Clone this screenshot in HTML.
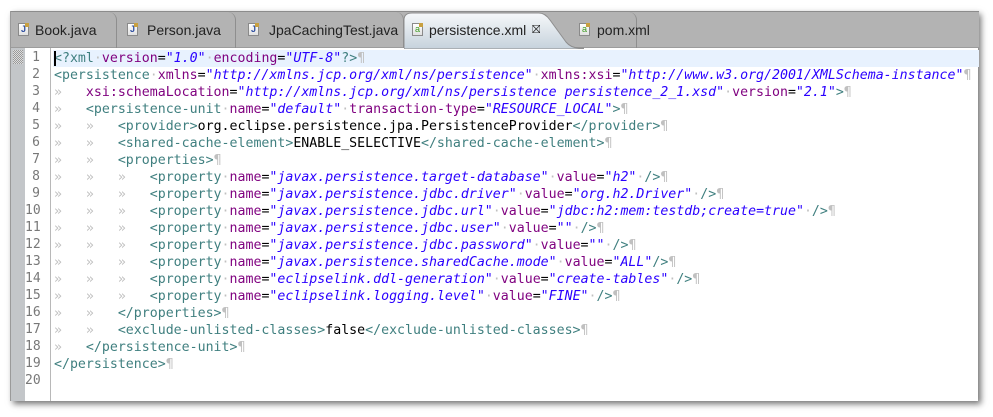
<!DOCTYPE html>
<html><head><meta charset="utf-8"><style>
*{margin:0;padding:0;box-sizing:border-box}
body{width:993px;height:417px;background:#fff;position:relative;overflow:hidden}
.win{position:absolute;left:10px;top:11px;width:968px;height:390px;background:#fff;box-shadow:3px 3px 6px rgba(0,0,0,.55);border-left:1px solid #9a9a9a}
.tabs{position:absolute;left:0;top:0;width:968px;height:37px;background:#b3b3b3;border-bottom:1px solid #9c9c9c;border-top:1px solid #8c8c8c}
.tab{position:absolute;top:0;height:36px;font:14px "Liberation Sans",sans-serif;color:#222;line-height:36px;border-right:1px solid #8e8e8e;border-radius:0 8px 0 0}
.ic{position:absolute;top:11px;width:11px;height:13px;border:1px solid #8a8a8a;background:linear-gradient(#fff,#e0e0e0);font:bold 9px "Liberation Sans",sans-serif;line-height:11px;text-align:center;color:#3050a0}
.ic.x{color:#3a9a20;font-weight:normal}
.ic::after{content:"";position:absolute;right:-1px;top:-1px;width:4px;height:4px;background:#c8a040}
.ed{position:absolute;left:0;top:37px;width:968px;height:353px}
.g1{position:absolute;left:0;top:0;width:14px;height:353px;background:#c3c6c9}
.g1 .d{position:absolute;left:2px;top:2px;width:10px;height:14px;background:repeating-conic-gradient(#999 0 25%,#ddd 0 50%) 0 0/2px 2px}
.ln{position:absolute;left:14px;top:0;width:26px;height:353px;border-right:1px solid #b8b8b8;background:#fff}
.ln div{height:17px;line-height:17px;text-align:right;padding-right:10px;font:13px "DejaVu Sans Mono",monospace;color:#787878}
.hl{position:absolute;left:42px;top:2px;width:926px;height:17px;background:#e8f2fe}
pre{position:absolute;left:43px;top:2px;font:13.25px/17px "DejaVu Sans Mono","Liberation Mono",monospace;color:#000;tab-size:4;white-space:pre}
.t{color:#3f7f7f}.a{color:#7f007f}.v{color:#2a00ff;font-style:italic}.w{color:#c0c0c0}
.cur{position:absolute;left:43px;top:3px;width:2px;height:15px;background:#000}
</style></head><body>
<div class="win">
<div class="tabs">
 <div class="tab" style="left:0;width:106px"><span class="ic" style="left:7px">J</span><span style="position:absolute;left:24px">Book.java</span></div>
 <div class="tab" style="left:106px;width:119px"><span class="ic" style="left:10px">J</span><span style="position:absolute;left:30px">Person.java</span></div>
 <div class="tab" style="left:225px;width:168px"><span class="ic" style="left:12px">J</span><span style="position:absolute;left:33px">JpaCachingTest.java</span></div>
 <svg style="position:absolute;left:393px;top:0" width="180" height="37"><path d="M0 37 V8 Q0 1 8 1 H135 Q141 1 146 8 L162 30 Q167 36 175 36 H180 V37 Z" fill="url(#g)" stroke="#8e8e8e"/><defs><linearGradient id="g" x1="0" y1="0" x2="0" y2="1"><stop offset="0" stop-color="#f6f8fa"/><stop offset="1" stop-color="#c6d2dc"/></linearGradient></defs></svg>
 <div class="tab" style="left:393px;width:150px;border:none"><span class="ic x" style="left:8px">a</span><span style="position:absolute;left:25px">persistence.xml</span><span style="position:absolute;left:128px;font-size:11px">⛝</span></div>
 <div class="tab" style="left:543px;width:83px"><span class="ic x" style="left:25px">a</span><span style="position:absolute;left:43px">pom.xml</span></div>
</div>
<div class="ed">
<div class="g1"><div class="d"></div></div>
<div class="hl"></div>
<div class="ln"><div style="height:2px"></div><div>1</div><div>2</div><div>3</div><div>4</div><div>5</div><div>6</div><div>7</div><div>8</div><div>9</div><div>10</div><div>11</div><div>12</div><div>13</div><div>14</div><div>15</div><div>16</div><div>17</div><div>18</div><div>19</div><div>20</div></div>
<pre><span class="t">&lt;?xml</span><span class="w">·</span><span class="a">version</span>=<span class="v">"1.0"</span><span class="w">·</span><span class="a">encoding</span>=<span class="v">"UTF-8"</span><span class="t">?&gt;</span><span class="w">¶</span>
<span class="t">&lt;persistence</span><span class="w">·</span><span class="a">xmlns</span>=<span class="v">"http://xmlns.jcp.org/xml/ns/persistence"</span><span class="w">·</span><span class="a">xmlns:xsi</span>=<span class="v">"http://www.w3.org/2001/XMLSchema-instance"</span><span class="w">¶</span>
<span class="w">»   </span><span class="a">xsi:schemaLocation</span>=<span class="v">"http://xmlns.jcp.org/xml/ns/persistence persistence_2_1.xsd"</span><span class="w">·</span><span class="a">version</span>=<span class="v">"2.1"</span><span class="t">&gt;</span><span class="w">¶</span>
<span class="w">»   </span><span class="t">&lt;persistence-unit</span><span class="w">·</span><span class="a">name</span>=<span class="v">"default"</span><span class="w">·</span><span class="a">transaction-type</span>=<span class="v">"RESOURCE_LOCAL"</span><span class="t">&gt;</span><span class="w">¶</span>
<span class="w">»   »   </span><span class="t">&lt;provider&gt;</span>org.eclipse.persistence.jpa.PersistenceProvider<span class="t">&lt;/provider&gt;</span><span class="w">¶</span>
<span class="w">»   »   </span><span class="t">&lt;shared-cache-element&gt;</span>ENABLE_SELECTIVE<span class="t">&lt;/shared-cache-element&gt;</span><span class="w">¶</span>
<span class="w">»   »   </span><span class="t">&lt;properties&gt;</span><span class="w">¶</span>
<span class="w">»   »   »   </span><span class="t">&lt;property</span><span class="w">·</span><span class="a">name</span>=<span class="v">"javax.persistence.target-database"</span><span class="w">·</span><span class="a">value</span>=<span class="v">"h2"</span><span class="w">·</span><span class="t">/&gt;</span><span class="w">¶</span>
<span class="w">»   »   »   </span><span class="t">&lt;property</span><span class="w">·</span><span class="a">name</span>=<span class="v">"javax.persistence.jdbc.driver"</span><span class="w">·</span><span class="a">value</span>=<span class="v">"org.h2.Driver"</span><span class="w">·</span><span class="t">/&gt;</span><span class="w">¶</span>
<span class="w">»   »   »   </span><span class="t">&lt;property</span><span class="w">·</span><span class="a">name</span>=<span class="v">"javax.persistence.jdbc.url"</span><span class="w">·</span><span class="a">value</span>=<span class="v">"jdbc:h2:mem:testdb;create=true"</span><span class="w">·</span><span class="t">/&gt;</span><span class="w">¶</span>
<span class="w">»   »   »   </span><span class="t">&lt;property</span><span class="w">·</span><span class="a">name</span>=<span class="v">"javax.persistence.jdbc.user"</span><span class="w">·</span><span class="a">value</span>=<span class="v">""</span><span class="w">·</span><span class="t">/&gt;</span><span class="w">¶</span>
<span class="w">»   »   »   </span><span class="t">&lt;property</span><span class="w">·</span><span class="a">name</span>=<span class="v">"javax.persistence.jdbc.password"</span><span class="w">·</span><span class="a">value</span>=<span class="v">""</span><span class="w">·</span><span class="t">/&gt;</span><span class="w">¶</span>
<span class="w">»   »   »   </span><span class="t">&lt;property</span><span class="w">·</span><span class="a">name</span>=<span class="v">"javax.persistence.sharedCache.mode"</span><span class="w">·</span><span class="a">value</span>=<span class="v">"ALL"</span><span class="t">/&gt;</span><span class="w">¶</span>
<span class="w">»   »   »   </span><span class="t">&lt;property</span><span class="w">·</span><span class="a">name</span>=<span class="v">"eclipselink.ddl-generation"</span><span class="w">·</span><span class="a">value</span>=<span class="v">"create-tables"</span><span class="w">·</span><span class="t">/&gt;</span><span class="w">¶</span>
<span class="w">»   »   »   </span><span class="t">&lt;property</span><span class="w">·</span><span class="a">name</span>=<span class="v">"eclipselink.logging.level"</span><span class="w">·</span><span class="a">value</span>=<span class="v">"FINE"</span><span class="w">·</span><span class="t">/&gt;</span><span class="w">¶</span>
<span class="w">»   »   </span><span class="t">&lt;/properties&gt;</span><span class="w">¶</span>
<span class="w">»   »   </span><span class="t">&lt;exclude-unlisted-classes&gt;</span>false<span class="t">&lt;/exclude-unlisted-classes&gt;</span><span class="w">¶</span>
<span class="w">»   </span><span class="t">&lt;/persistence-unit&gt;</span><span class="w">¶</span>
<span class="t">&lt;/persistence&gt;</span><span class="w">¶</span>
</pre>
<div class="cur"></div>
</div>
</div>
</body></html>
